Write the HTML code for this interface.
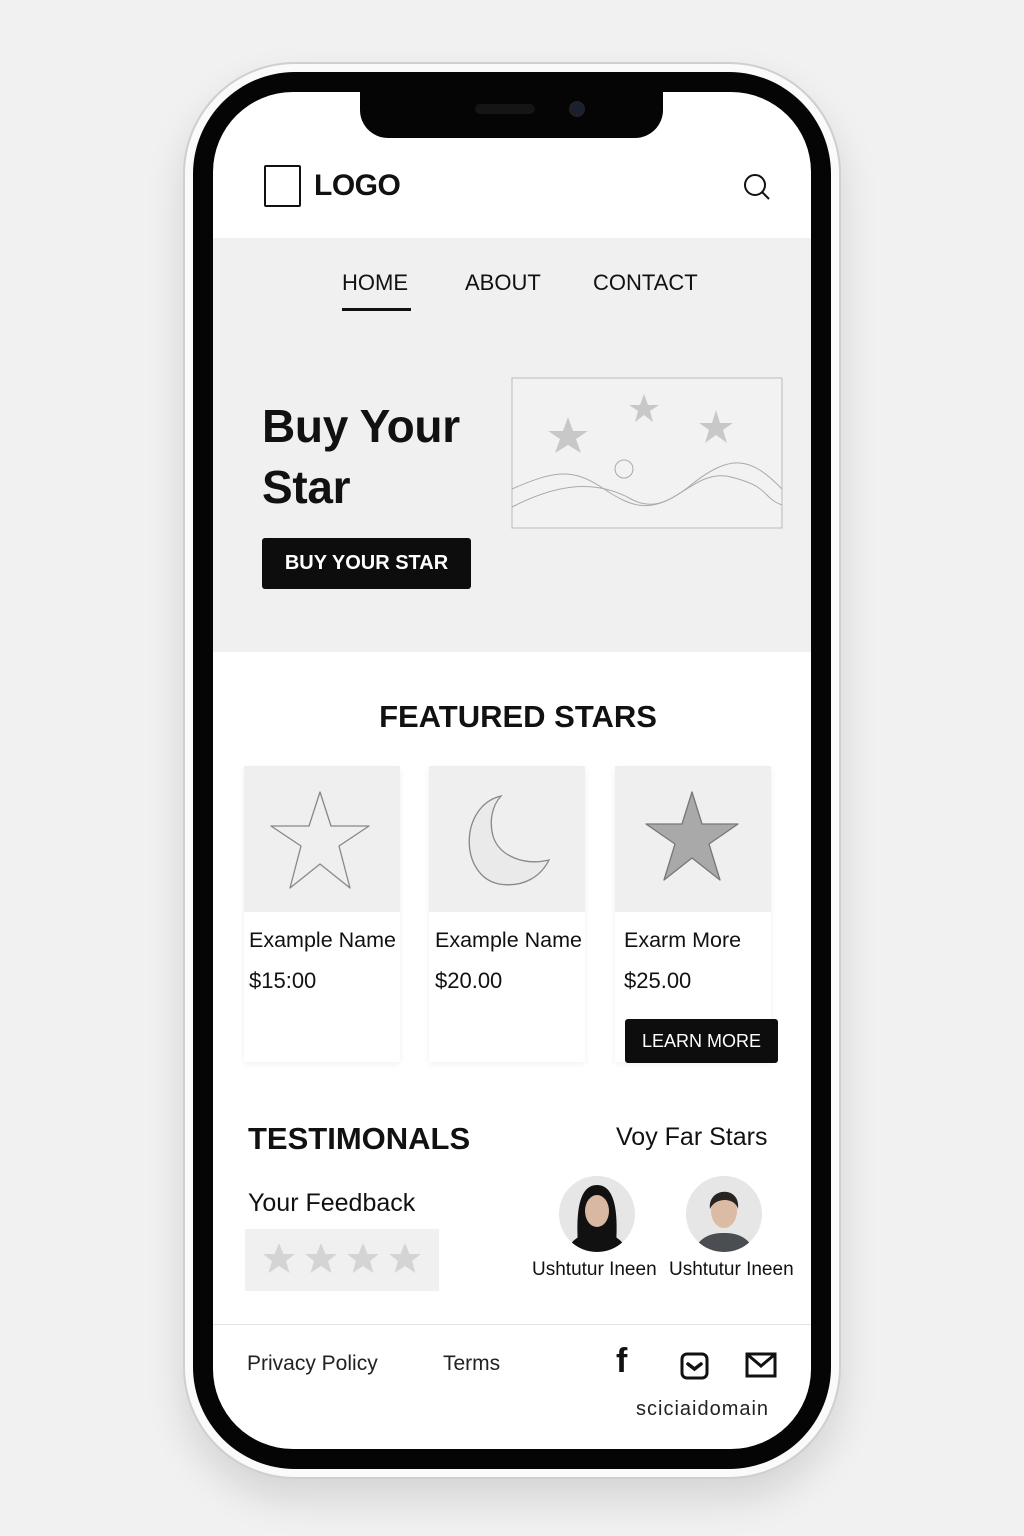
<!DOCTYPE html>
<html><head><meta charset="utf-8"><style>
*{margin:0;padding:0;box-sizing:border-box}
body{width:1024px;height:1536px;background:#f1f1f1;position:relative;overflow:hidden;font-family:"Liberation Sans",sans-serif;color:#111}
.a{position:absolute}
.phone{left:183px;top:62px;width:658px;height:1417px;border-radius:112px;background:#fafafa;border:2px solid #cfcfcf;box-shadow:0 20px 40px rgba(0,0,0,.12)}
.bezel{left:193px;top:72px;width:638px;height:1397px;border-radius:102px;background:#050505}
.screen{left:213px;top:92px;width:598px;height:1357px;border-radius:80px;background:#fff;overflow:hidden}
.notch{left:360px;top:88px;width:303px;height:50px;background:#050505;border-radius:0 0 28px 28px}
.t{position:absolute;white-space:nowrap}
.card{position:absolute;top:766px;width:156px;height:296px;background:#fff;box-shadow:0 2px 6px rgba(0,0,0,.06)}
.card .img{width:156px;height:146px;background:#efefef}
.btn{position:absolute;background:#0d0d0d;color:#fff;border-radius:3px;text-align:center}
</style></head><body>
<div class="a phone"></div>
<div class="a bezel"></div>
<div class="a screen">
  <div class="a" style="left:0;top:146px;width:598px;height:414px;background:#f0f0f0"></div>
</div>
<div class="a notch"></div>
<div class="a" style="left:475px;top:104px;width:60px;height:10px;border-radius:5px;background:#151515"></div>
<div class="a" style="left:569px;top:101px;width:16px;height:16px;border-radius:50%;background:#1b2030;border:2px solid #222"></div>

<div class="a" style="left:264px;top:165px;width:37px;height:42px;border:2px solid #111;border-radius:2px"></div>
<div class="t" style="left:314px;top:169px;font-size:30px;font-weight:bold;letter-spacing:-0.5px">LOGO</div>
<svg class="a" style="left:742px;top:172px" width="30" height="30" viewBox="0 0 30 30"><circle cx="13" cy="13" r="10" fill="none" stroke="#111" stroke-width="2"/><path d="M20 20l7 7" stroke="#111" stroke-width="2"/></svg>

<div class="t" style="left:342px;top:270px;font-size:22px">HOME</div>
<div class="a" style="left:342px;top:308px;width:69px;height:3px;background:#111"></div>
<div class="t" style="left:465px;top:270px;font-size:22px">ABOUT</div>
<div class="t" style="left:593px;top:270px;font-size:22px">CONTACT</div>

<div class="t" style="left:262px;top:396px;font-size:46px;font-weight:bold;line-height:61px;letter-spacing:-0.3px">Buy Your<br>Star</div>
<div class="btn" style="left:262px;top:538px;width:209px;height:51px;line-height:51px;font-size:20px;font-weight:bold">BUY YOUR STAR</div>

<svg class="a" style="left:511px;top:377px" width="272" height="152" viewBox="0 0 272 152">
<rect x="1" y="1" width="270" height="150" fill="#f2f2f2" stroke="#bbb"/>
<g fill="#c8c8c8">
<polygon points="57,40 62,54 77,54 65,62 70,76 57,68 44,76 49,62 37,54 52,54"/>
<polygon points="133,17 137,28 148,28 139,34 142,45 133,38 124,45 127,34 118,28 129,28"/>
<polygon points="205,33 209,46 222,46 212,53 216,66 205,58 194,66 198,53 188,46 201,46"/>
</g>
<circle cx="113" cy="92" r="9" fill="none" stroke="#aaa"/>
<path d="M1 112 C40 95 60 90 90 110 S140 140 180 108 S240 80 271 112" fill="none" stroke="#aaa"/>
<path d="M1 130 C40 110 80 100 120 122 S180 90 220 100 S250 120 271 128" fill="none" stroke="#aaa"/>
</svg>

<div class="t" style="left:0;width:1036px;text-align:center;top:699px;font-size:31px;font-weight:bold">FEATURED STARS</div>

<div class="card" style="left:244px"><div class="img"><svg width="156" height="146" viewBox="0 0 156 146"><polygon points="76,26 87,60 125,60 95,80 106,122 76,98 46,122 57,80 27,60 65,60" fill="#efefef" stroke="#888" stroke-width="1.3" stroke-linejoin="round"/></svg></div></div>
<div class="card" style="left:429px"><div class="img"><svg width="156" height="146" viewBox="0 0 156 146"><path d="M72 30 C30 40 30 110 70 118 C95 122 112 110 120 94 C95 100 70 90 64 70 C60 55 63 40 72 30Z" fill="#eaeaea" stroke="#888" stroke-width="1.3"/></svg></div></div>
<div class="card" style="left:615px"><div class="img"><svg width="156" height="146" viewBox="0 0 156 146"><polygon points="77,26 87,58 123,58 94,78 105,114 77,92 49,114 60,78 31,58 67,58" fill="#a9a9a9" stroke="#777" stroke-width="1.3" stroke-linejoin="round"/></svg></div></div>
<div class="t" style="left:249px;top:928px;font-size:21.5px">Example Name</div>
<div class="t" style="left:249px;top:968px;font-size:22px">$15:00</div>
<div class="t" style="left:435px;top:928px;font-size:21.5px">Example Name</div>
<div class="t" style="left:435px;top:968px;font-size:22px">$20.00</div>
<div class="t" style="left:624px;top:928px;font-size:21.5px">Exarm More</div>
<div class="t" style="left:624px;top:968px;font-size:22px">$25.00</div>
<div class="btn" style="left:625px;top:1019px;width:153px;height:44px;line-height:44px;font-size:18px">LEARN MORE</div>

<div class="t" style="left:248px;top:1121px;font-size:31px;font-weight:bold">TESTIMONALS</div>
<div class="t" style="left:616px;top:1123px;font-size:25px">Voy Far Stars</div>
<div class="t" style="left:248px;top:1189px;font-size:25px">Your Feedback</div>
<div class="a" style="left:245px;top:1229px;width:194px;height:62px;background:#f0f0f0"></div>
<svg class="a" style="left:260px;top:1240px" width="170" height="40" viewBox="0 0 170 40"><g fill="#d4d4d4">
<polygon points="19,3 23.5,14 35,14 26,21 29.5,33 19,26 8.5,33 12,21 3,14 14.5,14"/>
<polygon transform="translate(42,0)" points="19,3 23.5,14 35,14 26,21 29.5,33 19,26 8.5,33 12,21 3,14 14.5,14"/>
<polygon transform="translate(84,0)" points="19,3 23.5,14 35,14 26,21 29.5,33 19,26 8.5,33 12,21 3,14 14.5,14"/>
<polygon transform="translate(126,0)" points="19,3 23.5,14 35,14 26,21 29.5,33 19,26 8.5,33 12,21 3,14 14.5,14"/></g></svg>

<svg class="a" style="left:558px;top:1175px" width="78" height="78" viewBox="0 0 78 78"><defs><clipPath id="c1"><circle cx="39" cy="39" r="38"/></clipPath></defs><g clip-path="url(#c1)"><rect width="78" height="78" fill="#e6e6e6"/><path d="M20 70 C18 40 20 10 39 10 C58 10 60 40 58 70Z" fill="#111"/><ellipse cx="39" cy="36" rx="12" ry="16" fill="#d9b8a3"/><path d="M8 80 C12 62 26 58 39 58 C52 58 66 62 70 80Z" fill="#111"/></g></svg>
<svg class="a" style="left:685px;top:1175px" width="78" height="78" viewBox="0 0 78 78"><defs><clipPath id="c2"><circle cx="39" cy="39" r="38"/></clipPath></defs><g clip-path="url(#c2)"><rect width="78" height="78" fill="#e6e6e6"/><ellipse cx="39" cy="36" rx="13" ry="17" fill="#dcbba5"/><path d="M25 34 C22 12 56 10 53 34 C50 22 30 22 25 34Z" fill="#2a2420"/><path d="M8 80 C12 62 26 58 39 58 C52 58 66 62 70 80Z" fill="#4a4d52"/></g></svg>
<div class="t" style="left:532px;top:1259px;font-size:19px">Ushtutur Ineen</div>
<div class="t" style="left:669px;top:1259px;font-size:19px">Ushtutur Ineen</div>

<div class="a" style="left:213px;top:1324px;width:598px;height:1px;background:#e4e4e4"></div>
<div class="t" style="left:247px;top:1352px;font-size:21px;color:#222">Privacy Policy</div>
<div class="t" style="left:443px;top:1352px;font-size:21px;color:#222">Terms</div>
<div class="t" style="left:616px;top:1342px;font-size:34px;font-weight:bold">f</div>
<svg class="a" style="left:680px;top:1352px" width="29" height="28" viewBox="0 0 29 28"><rect x="2" y="2" width="25" height="24" rx="5" fill="none" stroke="#111" stroke-width="3"/><path d="M8 12l6.5 5 6.5-5" fill="none" stroke="#111" stroke-width="3.5" stroke-linecap="round"/></svg>
<svg class="a" style="left:745px;top:1352px" width="32" height="26" viewBox="0 0 32 26"><rect x="2" y="2" width="28" height="22" fill="none" stroke="#111" stroke-width="3"/><path d="M3 3l13 11 13-11" fill="none" stroke="#111" stroke-width="3"/></svg>
<div class="t" style="left:636px;top:1398px;font-size:20px;letter-spacing:1px;color:#222">sciciaidomain</div>
</body></html>
